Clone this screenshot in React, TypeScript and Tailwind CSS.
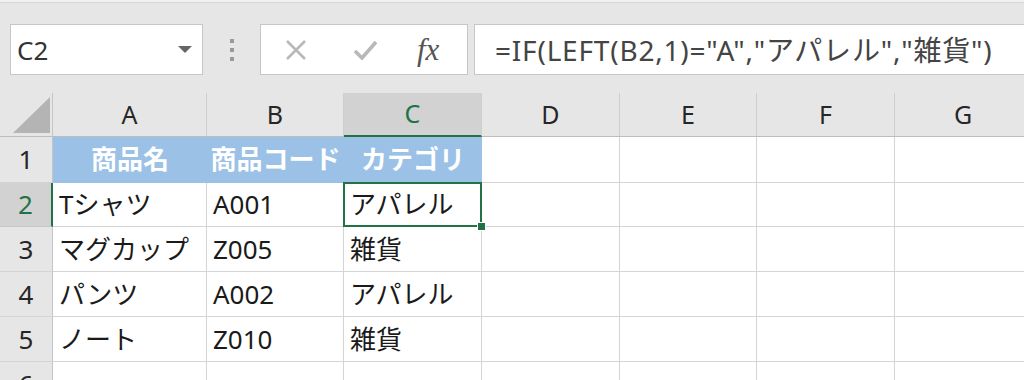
const cols = ["A", "B", "C", "D", "E", "F", "G", ""];
const widths = ["w-[154px]", "w-[137px]", "w-[138px]", "w-[138px]", "w-[137px]", "w-[138px]", "w-[137px]", "w-[40px]"];

const rows: { h: string; cells: string[] }[] = [
  { h: "h-[46px]", cells: ["商品名", "商品コード", "カテゴリ"] },
  { h: "h-[44px]", cells: ["Tシャツ", "A001", "アパレル"] },
  { h: "h-[45px]", cells: ["マグカップ", "Z005", "雑貨"] },
  { h: "h-[45px]", cells: ["パンツ", "A002", "アパレル"] },
  { h: "h-[45px]", cells: ["ノート", "Z010", "雑貨"] },
  { h: "h-[45px]", cells: [] },
];

export default function App() {
  return (
    <div
      className="w-[1024px] h-[380px] overflow-hidden bg-white text-[#262626]"
      style={{ fontFamily: '"Noto Sans", "Noto Sans CJK JP", sans-serif' }}
    >
      {/* toolbar */}
      <div className="h-[2px] bg-[#f0f0f0]" />
      <div className="h-px bg-[#d6d6d6]" />
      <div className="h-[90px] bg-[#e6e6e6] flex items-start pt-[21px] pl-[10px]">
        <div className="w-[193px] h-[51px] bg-white border border-[#c6c6c6] flex items-center justify-between pl-[6px] pr-[10px]">
          <span className="text-[26px] leading-none text-[#333]">C2</span>
          <svg width="14" height="8" viewBox="0 0 14 8">
            <path d="M0 0 L14 0 L7 7 Z" fill="#666" />
          </svg>
        </div>
        <div className="w-[57px] h-[51px] flex flex-col items-center justify-center gap-[5px]">
          <span className="w-[4px] h-[4px] bg-[#9a9a9a]" />
          <span className="w-[4px] h-[4px] bg-[#9a9a9a]" />
          <span className="w-[4px] h-[4px] bg-[#9a9a9a]" />
        </div>
        <div className="w-[208px] h-[51px] bg-white border border-[#c6c6c6] flex items-center">
          <svg className="ml-[24px]" width="22" height="20" viewBox="0 0 22 20">
            <path d="M2 1 L20 19 M20 1 L2 19" stroke="#b8b8b8" strokeWidth="2.6" />
          </svg>
          <svg className="ml-[46px]" width="25" height="20" viewBox="0 0 25 20">
            <path d="M2 11 L9 18 L23 2" stroke="#b8b8b8" strokeWidth="3.6" fill="none" />
          </svg>
          <span
            className="ml-[39px] text-[31px] leading-none text-[#555] italic"
            style={{ fontFamily: '"Liberation Serif", serif' }}
          >
            fx
          </span>
        </div>
        <div className="ml-[6px] flex-1 h-[51px] bg-white border border-[#c6c6c6] border-r-0 flex items-center pl-[20px]">
          <span className="text-[28px] tracking-[0.8px] leading-none text-[#444] whitespace-nowrap">
            =IF(LEFT(B2,1)="A","アパレル","雑貨")
          </span>
        </div>
      </div>

      {/* column headers */}
      <div className="flex h-[44px] bg-[#e6e6e6] border-b border-[#bdbdbd]">
        <div className="w-[53px] shrink-0 border-r border-[#c6c6c6] flex items-end justify-end pr-[2px] pb-[3px]">
          <svg width="37" height="36" viewBox="0 0 37 36">
            <path d="M0 36 L37 0 L37 36 Z" fill="#b4b4b4" />
          </svg>
        </div>
        {cols.map((c, i) => (
          <div
            key={i}
            className={`${widths[i]} shrink-0 flex items-center justify-center text-[25px] border-r border-[#cfcfcf] ${
              c === "C" ? "bg-[#d2d2d2] text-[#217346] border-b-2 border-b-[#217346] -mb-px" : ""
            }`}
          >
            {c}
          </div>
        ))}
      </div>

      {/* rows */}
      {rows.map((r, ri) => (
        <div key={ri} className={`flex ${r.h}`}>
          <div
            className={`w-[53px] shrink-0 flex items-center justify-center text-[26px] border-r border-b ${
              ri === 1
                ? "bg-[#d2d2d2] text-[#217346] border-r-2 border-r-[#217346] border-b-[#c6c6c6]"
                : "bg-[#e6e6e6] border-r-[#c6c6c6] border-b-[#d4d4d4]"
            }`}
          >
            {ri + 1}
          </div>
          {cols.map((_, ci) => {
            const text = r.cells[ci] ?? "";
            const head = ri === 0 && ci < 3;
            const selected = ri === 1 && ci === 2;
            return (
              <div
                key={ci}
                className={`${widths[ci]} shrink-0 relative flex items-center text-[26px] whitespace-nowrap ${
                  head
                    ? "bg-[#9bc2e6] text-white font-bold justify-center border-b border-[#9bc2e6]"
                    : "pl-[6px] border-r border-b border-[#d4d4d4] text-[#1a1a1a]"
                } ${selected ? "z-10" : ""}`}
              >
                {text}
                {selected && (
                  <>
                    <div className="absolute -left-px -top-px -right-px -bottom-px border-2 border-[#217346]" />
                    <div className="absolute -right-[5px] -bottom-[5px] w-[9px] h-[9px] bg-[#217346] border border-white" />
                  </>
                )}
              </div>
            );
          })}
        </div>
      ))}
    </div>
  );
}
